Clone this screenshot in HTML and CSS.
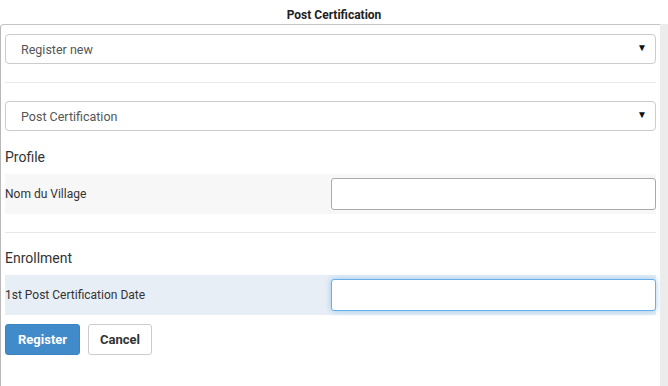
FILE: index.html
```html
<!DOCTYPE html>
<html lang="en">
<head>
    <meta charset="UTF-8">
    <title>Post Certification</title>
    <link rel="stylesheet" href="styles.css">
</head>
<body>

    <div class="title">Post Certification</div>

    <div class="frame">
        <div class="panel">
            <!-- Program select -->
            <div class="select-wrap">
                <select class="select">
                    <option>Register new</option>
                </select>
            </div>

            <hr>

            <div class="select-wrap">
                <select class="select">
                    <option>Post Certification</option>
                </select>
            </div>

            <!-- Profile -->
            <h4>Profile</h4>
            <div class="field">
                <label>Nom du Village</label>
                <input type="text" class="input">
            </div>

            <hr class="section-rule">

            <!-- Enrollment -->
            <h4>Enrollment</h4>
            <div class="field focus">
                <label>1st Post Certification Date</label>
                <input type="text" class="input active">
            </div>

            <div class="buttons">
                <button class="btn primary">Register</button>
                <button class="btn">Cancel</button>
            </div>
        </div>
        <div class="scrollbar"></div>
    </div>

</body>
</html>
```

FILE: styles.css
```css
/* General Styles */
body {
    margin: 0;
    font-family: Roboto, 'Liberation Sans', sans-serif;
    color: #333;
    background: #fff;
    height: 386px;
    display: flex;
    flex-direction: column;
    overflow: hidden;
}

.title {
    height: 24px;
    line-height: 31px;
    text-align: center;
    font-size: 12px;
    font-weight: bold;
    color: #222;
}

.frame {
    flex: 1;
    display: flex;
}

.panel {
    flex: 1;
    border-top: 1px solid #c4c4c4;
    border-left: 1px solid #b8b8b8;
    border-top-left-radius: 4px;
    padding: 9px 4px 0 4px;
}

.scrollbar {
    width: 8px;
    background: #ececec;
}

.select-wrap {
    position: relative;
}

.select-wrap::after {
    content: "\25BC";
    position: absolute;
    right: 9px;
    top: 8px;
    font-size: 10px;
    color: #111;
    pointer-events: none;
}

.select {
    appearance: none;
    -webkit-appearance: none;
    width: 100%;
    height: 30px;
    padding: 0 15px;
    border: 1px solid #ccc;
    border-radius: 4px;
    background: #fff;
    font-family: inherit;
    font-size: 12.5px;
    color: #555;
}

hr {
    border: none;
    border-top: 1px solid #e8e8e8;
    margin: 18px 0;
}

hr.section-rule {
    margin-bottom: 0;
}

h4 {
    font-size: 14px;
    font-weight: normal;
    line-height: 20px;
    margin: 15px 0 7px;
    color: #333;
}

.select-wrap + h4 {
    margin-top: 16px;
}

.field {
    display: grid;
    grid-template-columns: 1fr 1fr;
    align-items: center;
    background: #f7f7f7;
    padding: 4px 0;
}

.field.focus {
    background: #e8eef6;
}

.field label {
    font-size: 12px;
    color: #333;
}

.input {
    height: 32px;
    box-sizing: border-box;
    border: 1px solid #aaa;
    border-radius: 3px;
    background: #fff;
    margin: 0;
}

.input.active {
    border-color: #66afe9;
    box-shadow: 0 0 6px rgba(102, 175, 233, 0.6);
    outline: none;
}

.buttons {
    display: flex;
    gap: 8px;
    margin-top: 9px;
}

.btn {
    height: 31px;
    padding: 0 11px;
    border: 1px solid #ccc;
    border-radius: 3px;
    background: #fff;
    color: #333;
    font-family: inherit;
    font-size: 13px;
    font-weight: bold;
}

.btn.primary {
    background: #428bca;
    border-color: #3c83c1;
    color: #fff;
    padding: 0 12px;
}
```
